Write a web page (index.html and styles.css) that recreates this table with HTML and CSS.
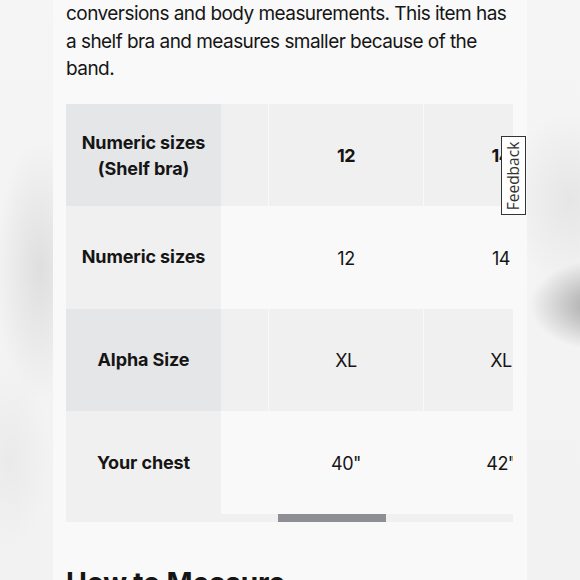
FILE: index.html
```html
<!DOCTYPE html>
<html lang="en">
<head>
<meta charset="utf-8">
<title>Size chart</title>
<link rel="stylesheet" href="styles.css">
</head>
<body>
<div class="backdrop">
  <main class="panel">
    <p class="intro">conversions and body measurements. This item has a shelf bra and measures smaller because of the band.</p>

    <div class="chart">
      <div class="labels">
        <div class="label odd">Numeric sizes<br>(Shelf bra)</div>
        <div class="label even">Numeric sizes</div>
        <div class="label odd">Alpha Size</div>
        <div class="label even last">Your chest</div>
      </div>
      <div class="scroller">
        <div class="viewport">
          <div class="track">
            <div class="row odd head">
              <div class="cell">10</div><div class="cell">12</div><div class="cell">14</div><div class="cell">16</div><div class="cell">18</div>
            </div>
            <div class="row even">
              <div class="cell">10</div><div class="cell">12</div><div class="cell">14</div><div class="cell">16</div><div class="cell">18</div>
            </div>
            <div class="row odd">
              <div class="cell">L</div><div class="cell">XL</div><div class="cell">XL</div><div class="cell">XXL</div><div class="cell">XXL</div>
            </div>
            <div class="row even">
              <div class="cell">38"</div><div class="cell">40"</div><div class="cell">42"</div><div class="cell">44"</div><div class="cell">46"</div>
            </div>
          </div>
        </div>
        <div class="scrollbar"><div class="thumb"></div></div>
      </div>
    </div>

    <h2 class="section-title">How to Measure</h2>
  </main>
</div>
<button class="feedback" type="button"><span>Feedback</span></button>
</body>
</html>
```

FILE: styles.css
```css
html, body {
  margin: 0;
  padding: 0;
  height: 100%;
  overflow: hidden;
}

body {
  font-family: Inter, "Liberation Sans", sans-serif;
  color: #151515;
  background:
    radial-gradient(ellipse 70px 45px at 600px 305px, rgba(140,140,140,0.8), rgba(140,140,140,0) 100%),
    radial-gradient(ellipse 60px 90px at 570px 200px, rgba(215,215,215,0.5), rgba(215,215,215,0) 100%),
    radial-gradient(ellipse 45px 130px at 40px 270px, rgba(205,205,205,0.55), rgba(205,205,205,0) 100%),
    radial-gradient(ellipse 40px 90px at 10px 460px, rgba(225,225,225,0.5), rgba(225,225,225,0) 100%),
    linear-gradient(#f5f5f5, #f2f2f2);
}

.backdrop {
  display: flex;
  justify-content: center;
  height: 100%;
}

.panel {
  width: 474px;
  box-sizing: border-box;
  padding: 0 14px 0 13px;
  background: #f9f9f9;
  height: 100%;
}

.intro {
  margin: 0 0 21px;
  font-size: 19px;
  line-height: 27.5px;
  letter-spacing: -0.55px;
}

.chart {
  display: flex;
  background: #f0f0f0;
}

.labels {
  display: flex;
  flex-direction: column;
  width: 155px;
  flex: none;
}

.label {
  height: 102.5px;
  display: flex;
  align-items: center;
  justify-content: center;
  text-align: center;
  font-weight: 700;
  font-size: 18px;
  line-height: 26px;
  letter-spacing: -0.1px;
}

.label.odd { background: #e5e6e8; }
.label.even { background: #f0f0f0; }
.label:first-child { padding-top: 3px; box-sizing: border-box; }
.label.last { height: 110.5px; padding-bottom: 6px; box-sizing: border-box; }

.scroller {
  flex: 1;
  min-width: 0;
  display: flex;
  flex-direction: column;
}

.viewport {
  overflow: hidden;
}

.track {
  margin-left: -107px;
  display: flex;
  flex-direction: column;
  width: max-content;
}

.row {
  display: flex;
  gap: 1px;
  height: 102.5px;
  background: #f9f9f9;
}

.cell {
  width: 154px;
  display: flex;
  align-items: center;
  justify-content: center;
  font-size: 18px;
  letter-spacing: -0.5px;
}

.row.odd .cell { background: #f0f0f0; }
.row.head .cell { font-weight: 700; padding-top: 2px; box-sizing: border-box; }
.row + .row .cell { padding-top: 2px; box-sizing: border-box; }

.scrollbar {
  height: 8px;
  background: #f0f0f0;
  display: flex;
}

.thumb {
  margin-left: 57px;
  width: 108px;
  background: #8d8f94;
}

.section-title {
  margin: 45px 0 0;
  font-size: 28px;
  line-height: 1.2;
  font-weight: 700;
  letter-spacing: -0.2px;
}

.feedback {
  position: fixed;
  left: 501px;
  top: 136px;
  width: 25px;
  height: 79px;
  box-sizing: border-box;
  margin: 0;
  padding: 0;
  background: #ffffff;
  border: 1.5px solid #333;
  display: flex;
  align-items: center;
  justify-content: center;
}

.feedback span {
  display: block;
  transform: rotate(-90deg);
  font-family: "Open Sans", "Liberation Sans", sans-serif;
  font-size: 15.5px;
  color: #333;
  white-space: nowrap;
}
```
